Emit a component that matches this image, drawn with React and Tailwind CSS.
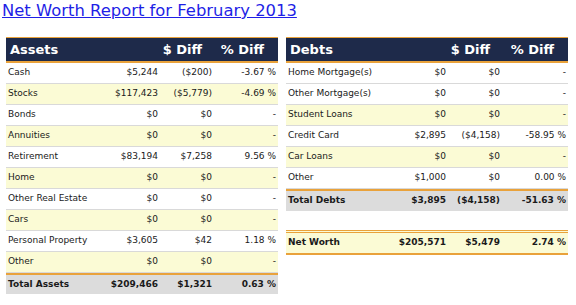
import React from "react";

const assets = [
  ["Cash", "$5,244", "($200)", "-3.67 %", false],
  ["Stocks", "$117,423", "($5,779)", "-4.69 %", true],
  ["Bonds", "$0", "$0", "-", false],
  ["Annuities", "$0", "$0", "-", true],
  ["Retirement", "$83,194", "$7,258", "9.56 %", false],
  ["Home", "$0", "$0", "-", true],
  ["Other Real Estate", "$0", "$0", "-", false],
  ["Cars", "$0", "$0", "-", true],
  ["Personal Property", "$3,605", "$42", "1.18 %", false],
  ["Other", "$0", "$0", "-", true],
];

const debts = [
  ["Home Mortgage(s)", "$0", "$0", "-", false],
  ["Other Mortgage(s)", "$0", "$0", "-", false],
  ["Student Loans", "$0", "$0", "-", true],
  ["Credit Card", "$2,895", "($4,158)", "-58.95 %", false],
  ["Car Loans", "$0", "$0", "-", true],
  ["Other", "$1,000", "$0", "0.00 %", false],
];

function Header({ title, cols }) {
  return (
    <div className={`grid ${cols} h-[26px] bg-[#1e2a4a] border-t border-b-2 border-[#e9a23b] items-center text-white font-bold text-[13px] font-['DejaVu_Sans',sans-serif]`}>
      <div className="pl-1 col-span-2">{title}</div>
      <div className="text-right pr-3">$ Diff</div>
      <div className="text-right pr-[14px]">% Diff</div>
    </div>
  );
}

function Row({ r, cols }) {
  return (
    <div className={`grid ${cols} h-[21px] items-center border-b border-[#d9d9d9] text-[9px] text-[#1a1a1a] ${r[4] ? "bg-[#fbfbd5]" : "bg-white"}`}>
      <div className="pl-0.5 whitespace-nowrap">{r[0]}</div>
      <div className="text-right pr-0.5">{r[1]}</div>
      <div className="text-right pr-0.5">{r[2]}</div>
      <div className="text-right pr-0.5">{r[3]}</div>
    </div>
  );
}

export default function App() {
  const L = "grid-cols-[102px_52px_54px_64px]";
  const R = "grid-cols-[104px_58px_54px_66px]";
  return (
    <div className="w-[576px] h-[305px] bg-white font-['DejaVu_Sans',sans-serif] overflow-hidden">
      <div className="pl-[2px] text-[16.4px] leading-[21px]">
        <a href="#" className="text-[#1f1fe6] underline">Net Worth Report for February 2013</a>
      </div>
      <div className="flex gap-2 pl-[6px] mt-4">
        <div className="w-[272px]">
          <Header title="Assets" cols={L} />
          {assets.map((r) => (
            <Row key={r[0]} r={r} cols={L} />
          ))}
          <div className={`grid ${L} h-[21px] items-center border-t-2 border-[#e9a23b] bg-[#dcdcdc] text-[9px] font-bold text-[#1a1a1a]`}>
            <div className="pl-0.5">Total Assets</div>
            <div className="text-right pr-0.5">$209,466</div>
            <div className="text-right pr-0.5">$1,321</div>
            <div className="text-right pr-0.5">0.63 %</div>
          </div>
        </div>
        <div className="w-[282px]">
          <Header title="Debts" cols={R} />
          {debts.map((r) => (
            <Row key={r[0]} r={r} cols={R} />
          ))}
          <div className={`grid ${R} h-[22px] items-center border-t-2 border-[#e9a23b] bg-[#dcdcdc] text-[9px] font-bold text-[#1a1a1a]`}>
            <div className="pl-0.5">Total Debts</div>
            <div className="text-right pr-0.5">$3,895</div>
            <div className="text-right pr-0.5">($4,158)</div>
            <div className="text-right pr-0.5">-51.63 %</div>
          </div>
          <div className={`grid ${R} h-[25px] mt-[19px] items-center border-t-[3px] border-double border-b-2 border-[#e9a23b] bg-[#fbfbd5] text-[9px] font-bold text-[#1a1a1a]`}>
            <div className="pl-0.5">Net Worth</div>
            <div className="text-right pr-0.5">$205,571</div>
            <div className="text-right pr-0.5">$5,479</div>
            <div className="text-right pr-0.5">2.74 %</div>
          </div>
        </div>
      </div>
    </div>
  );
}
